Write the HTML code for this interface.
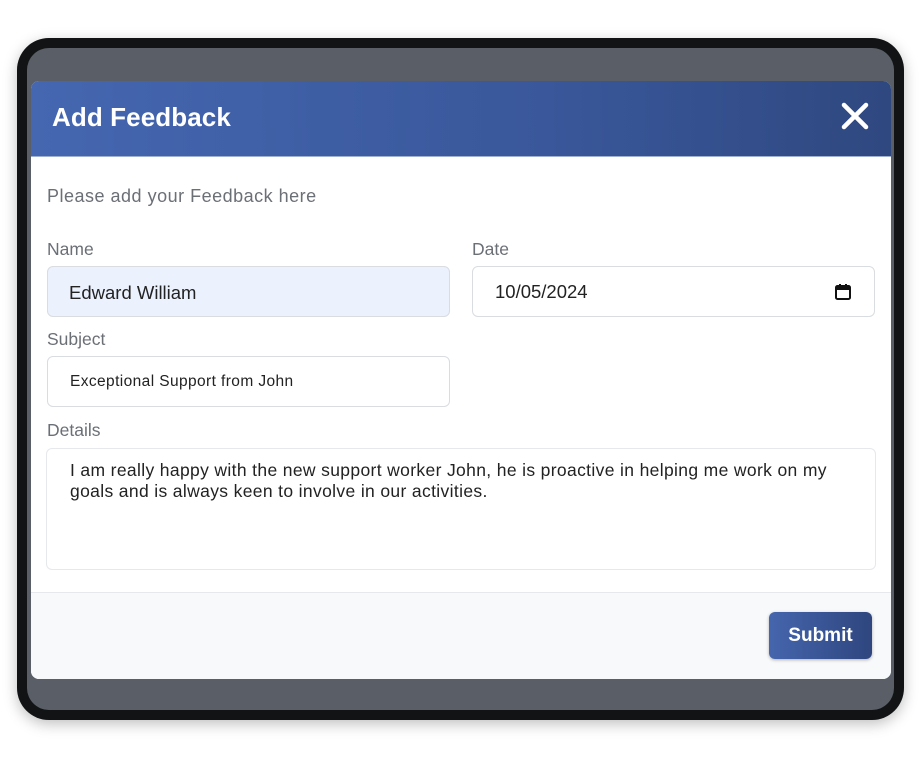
<!DOCTYPE html>
<html><head><style>
body{margin:0;width:922px;height:757px;background:#fff;position:relative;font-family:"Liberation Sans",sans-serif;overflow:hidden}
.frame{position:absolute;left:17px;top:38px;width:887px;height:682px;background:#111314;border-radius:32px;box-shadow:0 4px 14px rgba(0,0,0,.25)}
.screen{position:absolute;left:27px;top:48px;width:867px;height:662px;background:#5a5f67;border-radius:22px}
.modal{position:absolute;left:31px;top:81px;width:860px;height:598px;background:#fff;border-radius:8px;overflow:hidden}
.hdr{height:75px;background:linear-gradient(90deg,#4567b1,#39579a 60%,#2f4880);position:relative;border-bottom:1px solid #9fb0d0}
.hdr h1{margin:0;position:absolute;left:21px;top:21px;color:#fff;font-size:26px;font-weight:bold;letter-spacing:.1px}
.x{position:absolute;left:809px;top:20px}
.t{position:absolute;color:#6b6f76;font-size:17.5px}
.in{position:absolute;border:1px solid #d9dce1;border-radius:6px;background:#fff;box-sizing:border-box;color:#222;}
.foot{position:absolute;left:0;top:511px;width:860px;height:87px;background:#f8f9fb;border-top:1px solid #e6e8ec}
.btn{position:absolute;left:738px;top:19px;width:103px;height:47px;border-radius:6px;background:linear-gradient(90deg,#4565ad,#2f467f);color:#fff;font-weight:bold;font-size:19px;text-align:center;line-height:47px;box-shadow:0 1px 3px rgba(0,0,0,.3)}
</style></head><body>
<div class="frame"></div><div class="screen"></div>
<div class="modal">
<div class="hdr"><h1>Add Feedback</h1>
<svg class="x" width="30" height="30" viewBox="0 0 30 30"><path d="M4 4L26 26M26 4L4 26" stroke="#fff" stroke-width="4.5" stroke-linecap="round"/></svg></div>
<div class="t" style="left:16px;top:105px;font-size:18px;letter-spacing:.5px">Please add your Feedback here</div>
<div class="t" style="left:16px;top:158px">Name</div>
<div class="t" style="left:441px;top:158px">Date</div>
<div class="in" style="left:16px;top:185px;width:403px;height:51px;background:#ebf1fd;font-size:18.5px;padding:15px 0 0 21px">Edward William</div>
<div class="in" style="left:441px;top:185px;width:403px;height:51px;font-size:18.5px;padding:14px 0 0 22px">10/05/2024
<svg style="position:absolute;left:361px;top:16px" width="18" height="18" viewBox="0 0 18 18"><rect x="2" y="3" width="14" height="13" rx="1.5" fill="none" stroke="#111" stroke-width="2"/><rect x="2" y="3" width="14" height="4" fill="#111"/><rect x="5" y="1" width="2" height="3" fill="#111"/><rect x="11" y="1" width="2" height="3" fill="#111"/></svg></div>
<div class="t" style="left:16px;top:248px">Subject</div>
<div class="in" style="left:16px;top:275px;width:403px;height:51px;font-size:15.5px;padding:16px 0 0 22px;letter-spacing:.4px">Exceptional Support from John</div>
<div class="t" style="left:16px;top:339px">Details</div>
<div class="in" style="left:15px;top:367px;width:830px;height:122px;font-size:17.5px;letter-spacing:.35px;line-height:21px;padding:11px 0 0 23px;border-color:#e6e8ec">I am really happy with the new support worker John, he is proactive in helping me work on my<br>goals and is always keen to involve in our activities.</div>
<div class="foot"><div class="btn">Submit</div></div>
</div>
</body></html>
